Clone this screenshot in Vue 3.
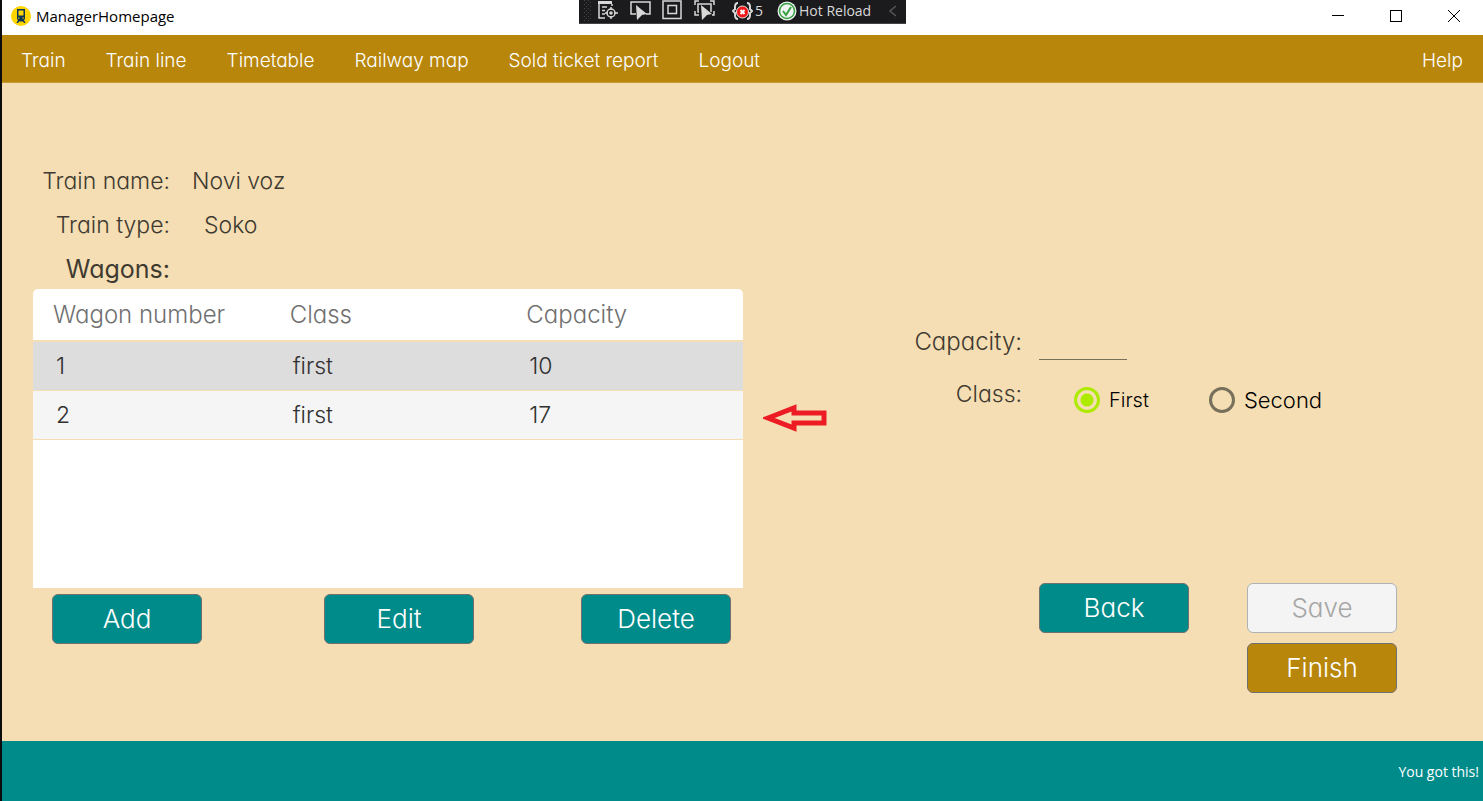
<script setup>
import { ref } from 'vue'

const menu = ['Train', 'Train line', 'Timetable', 'Railway map', 'Sold ticket report', 'Logout']
const wagons = [
  { number: 1, type: 'first', capacity: 10, selected: true },
  { number: 2, type: 'first', capacity: 17, selected: false },
]
const capacity = ref('')
const wagonClass = ref('first')
</script>

<template>
  <div class="window">
    <header class="titlebar">
      <div class="title">
        <svg width="20" height="20" viewBox="0 0 20 20" aria-hidden="true">
          <circle cx="10" cy="10" r="10" fill="#ffd500" />
          <path fill="#0d3454" fill-rule="evenodd" d="M6 3h8v10l-1 1 1.500 3h-1.500l-1-1.500h-4l-1 1.500h-1.500l1.500-3-1-1zM7.500 4.500v5h5v-5zM7 11.500v1h1.500v-1zM11.500 11.500v1h1.500v-1z" />
        </svg>
        <span>ManagerHomepage</span>
      </div>

      <div class="debugbar">
        <svg class="grip" width="8" height="22" viewBox="0 0 8 22" fill="#46464a" aria-hidden="true">
          <path d="M0 0h1v1H0zM4 0h1v1H4zM2 2h1v1H2zM6 2h1v1H6zM0 4h1v1H0zM4 4h1v1H4zM2 6h1v1H2zM6 6h1v1H6zM0 8h1v1H0zM4 8h1v1H4zM2 10h1v1H2zM6 10h1v1H6zM0 12h1v1H0zM4 12h1v1H4zM2 14h1v1H2zM6 14h1v1H6zM0 16h1v1H0zM4 16h1v1H4zM2 18h1v1H2zM6 18h1v1H6zM0 20h1v1H0zM4 20h1v1H4z" />
        </svg>
        <svg class="tools" width="122" height="24" viewBox="0 0 122 24" fill="none" stroke="#d8d8d8" stroke-width="1.500" aria-hidden="true">
          <path d="M0 2h14v3H0z" fill="#d8d8d8" stroke="none" />
          <path d="M1 4v15h6M4 8h5M4 11.500h3M4 15h3M14 5v2" />
          <circle cx="13" cy="14" r="4" />
          <circle cx="13" cy="14" r="1" fill="#d8d8d8" />
          <path d="M13 8v3M13 17v3M7 14h3M16 14h4" />
          <path d="M38 15h-5V3h19v12h-4" />
          <path d="M38 6l11 9-5 1-5 5z" fill="#d8d8d8" stroke="none" />
          <path d="M65 2h18v17.500H65zM70 6.500h8.500v8H70z" />
          <path d="M97 6V2h4M112 2h4v4M97 12v4h4M116 12v4h-2M101 13h-1V5h13v8" />
          <path d="M103 6l11 9-5 1-5 5z" fill="#d8d8d8" stroke="none" />
        </svg>
        <span class="faults">
          <svg width="21" height="20" viewBox="0 0 21 20" fill="none" aria-hidden="true">
            <path d="M6 2C3 2 3 4 3 6v2l-2 2 2 2v2c0 2 0 4 3 4M15 2c3 0 3 2 3 4v2l2 2-2 2v2c0 2 0 4-3 4" stroke="#d8d8d8" stroke-width="2" />
            <circle cx="10.500" cy="11" r="6" fill="#f01818" stroke="#e8e8e8" />
            <path d="M8.500 9l4 4M12.500 9l-4 4" stroke="#fff" stroke-width="2" />
          </svg>
          <span>5</span>
        </span>
        <span class="reload">
          <svg width="20" height="20" viewBox="0 0 20 20" fill="none" aria-hidden="true">
            <circle cx="10" cy="10" r="9.500" fill="#f2f2f2" />
            <circle cx="10" cy="10" r="7.500" stroke="#34a040" stroke-width="1.500" />
            <path d="M6 10l3 4 5-8" stroke="#34a040" stroke-width="2" />
          </svg>
          <span>Hot Reload</span>
        </span>
        <svg width="8" height="12" viewBox="0 0 8 12" fill="none" stroke="#555559" stroke-width="1.500" aria-hidden="true"><path d="M7 1L1 6l6 5" /></svg>
      </div>

      <div class="controls">
        <button type="button" aria-label="Minimize"><svg width="12" height="12" shape-rendering="crispEdges"><path d="M0 5.500h12" stroke="#000" /></svg></button>
        <button type="button" aria-label="Maximize"><svg width="12" height="12" shape-rendering="crispEdges"><path d="M.5 .5h11v11H.5z" fill="none" stroke="#000" /></svg></button>
        <button type="button" aria-label="Close"><svg width="12" height="12"><path d="M0 0l12 12M12 0L0 12" stroke="#000" /></svg></button>
      </div>
    </header>

    <nav class="menu">
      <a v-for="item in menu" :key="item" href="#">{{ item }}</a>
      <a class="help" href="#">Help</a>
    </nav>

    <main>
      <section class="train">
        <dl>
          <dt>Train name:</dt>
          <dd class="name">Novi voz</dd>
          <dt>Train type:</dt>
          <dd class="type">Soko</dd>
          <dt class="heading">Wagons:</dt>
        </dl>
        <div class="wagons">
          <table>
            <thead>
              <tr><th>Wagon number</th><th>Class</th><th>Capacity</th></tr>
            </thead>
            <tbody>
              <tr v-for="w in wagons" :key="w.number" :class="{ selected: w.selected }">
                <td>{{ w.number }}</td><td>{{ w.type }}</td><td>{{ w.capacity }}</td>
              </tr>
            </tbody>
          </table>
          <svg class="arrow" width="66" height="28" viewBox="0 0 66 28" fill="none" stroke="#ed1c24" stroke-width="5" aria-hidden="true">
            <path d="M5 14L31 4v5h30v10H31v5z" />
          </svg>
        </div>
        <div class="row-actions">
          <button class="btn add" type="button">Add</button>
          <button class="btn edit" type="button">Edit</button>
          <button class="btn delete" type="button">Delete</button>
        </div>
      </section>

      <form class="editor" @submit.prevent>
        <div class="fields">
          <label class="caption" for="capacity">Capacity:</label>
          <input id="capacity" v-model="capacity" class="capacity" type="text">
          <span id="class-label" class="caption">Class:</span>
          <div class="choices" role="radiogroup" aria-labelledby="class-label">
            <label class="first"><input v-model="wagonClass" type="radio" name="class" value="first">First</label>
            <label class="second"><input v-model="wagonClass" type="radio" name="class" value="second">Second</label>
          </div>
        </div>
        <div class="form-actions">
          <button class="btn" type="button">Back</button>
          <button class="btn save" type="submit" disabled>Save</button>
          <button class="btn finish" type="button">Finish</button>
        </div>
      </form>
    </main>

    <footer>You got this!</footer>
  </div>
</template>

<style>
body { margin: 0; }
</style>

<style scoped>
* { box-sizing: border-box; }
.window {
  min-height: 100vh;
  display: flex;
  flex-direction: column;
  border-left: 2px solid #0c0c0e;
  background: #f5deb3;
  color: #3f3a31;
  font: 300 23px/28px Inter, "Open Sans", sans-serif;
  font-feature-settings: "cv11";
}
button, input { font: inherit; font-feature-settings: inherit; }

.titlebar {
  height: 35px;
  display: grid;
  grid-template-columns: 1fr auto 1fr;
  align-items: start;
  background: #fff;
  color: #000;
  font: 400 15px/20px "Open Sans", "Noto Sans", sans-serif;
}
.title { display: flex; align-items: center; gap: 5px; padding: 6px 0 0 9px; }
.debugbar {
  width: 327px;
  height: 24px;
  display: flex;
  align-items: center;
  padding: 0 0 1px 5px;
  background: #1b1b1d;
  border-bottom: 1px solid #444448;
  color: #d8d8d8;
  font-size: 14px;
}
.grip { margin-right: 6px; }
.faults, .reload { display: flex; align-items: center; gap: 2px; }
.faults { margin-left: 12px; }
.reload { margin: 0 18px 0 14px; }
.controls { display: flex; justify-content: flex-end; }
.controls button { width: 58px; height: 32px; padding: 0; border: 0; background: none; }
.controls svg { display: block; margin: 0 auto; }

.menu {
  height: 48px;
  display: flex;
  align-items: center;
  gap: 40px;
  padding: 4px 20px 0 19px;
  background: #b8860b;
  border-bottom: 1px solid #c99c34;
  font-size: 19px;
}
.menu a { color: #fff; text-decoration: none; white-space: nowrap; }
.help { margin-left: auto; }

main {
  flex: 1;
  display: grid;
  grid-template-columns: 71fr 74fr;
  padding-left: 31px;
}
.train { padding-top: 76px; }
dl { margin: 0; display: grid; grid-template-columns: 137px 1fr; grid-auto-rows: 44px; align-items: center; }
dt { text-align: right; white-space: nowrap; }
dd { margin: 0; }
.name { padding-left: 22px; }
.type { padding-left: 34px; }
.heading { font-size: 25px; font-weight: 400; }

.wagons { position: relative; min-height: 299px; margin-top: -2px; background: #fff; border-radius: 5px 5px 0 0; }
table { width: 100%; table-layout: fixed; border-collapse: collapse; }
th, td { padding: 0 0 0 20px; text-align: left; font-weight: 300; border-bottom: 1px solid #f5deb3; }
th { height: 52px; font-size: 24px; color: #707070; border-bottom-width: 2px; }
td { height: 49px; padding-left: 23px; color: #303030; background: #f5f5f5; }
.selected td { background: #ddd; }
.arrow { position: absolute; left: calc(100% + 20px); top: 115px; }

.row-actions { display: grid; grid-template-columns: 150px 122fr 150px 107fr 150px; padding: 6px 12px 0 19px; }
.edit { grid-column: 3; }
.delete { grid-column: 5; }
.btn {
  height: 50px;
  padding: 0;
  border: 1px solid #707070;
  border-radius: 6px;
  background: #008b8b;
  color: #fff;
  font-size: 26px;
  font-weight: 300;
}
.save { background: #f4f4f4; color: #a6a6a6; border-color: #adb2b5; }
.finish { background: #b8860b; grid-column: 2; }

.editor { padding-top: 241px; }
.fields { display: grid; grid-template-columns: 279px 1fr; column-gap: 17px; row-gap: 14px; align-items: center; }
.caption { text-align: right; }
label.caption { font-size: 24px; }
.capacity { width: 88px; height: 36px; padding: 0; border: 0; border-bottom: 1px solid #777056; background: none; outline: 0; }
.choices { display: flex; align-items: center; gap: 60px; padding: 12px 0 0 35px; color: #000; }
.choices label { display: flex; align-items: center; gap: 9px; }
.first { font-size: 20px; }
.second { font-size: 22px; }
.choices input {
  appearance: none;
  width: 26px;
  height: 26px;
  margin: 0;
  border: 3px solid #77705a;
  border-radius: 50%;
}
.choices input:checked { border-color: #aeea00; background: radial-gradient(circle, #aeea00 6px, transparent 7px); }
.form-actions {
  display: grid;
  grid-template-columns: 150px 150px;
  column-gap: 58px;
  row-gap: 10px;
  padding: 169px 0 0 296px;
}

footer {
  height: 60px;
  display: flex;
  align-items: center;
  justify-content: flex-end;
  padding: 2px 4px 0 0;
  background: #008b8b;
  color: #fff;
  font: 400 14px/20px "Open Sans", "Noto Sans", sans-serif;
}
</style>
